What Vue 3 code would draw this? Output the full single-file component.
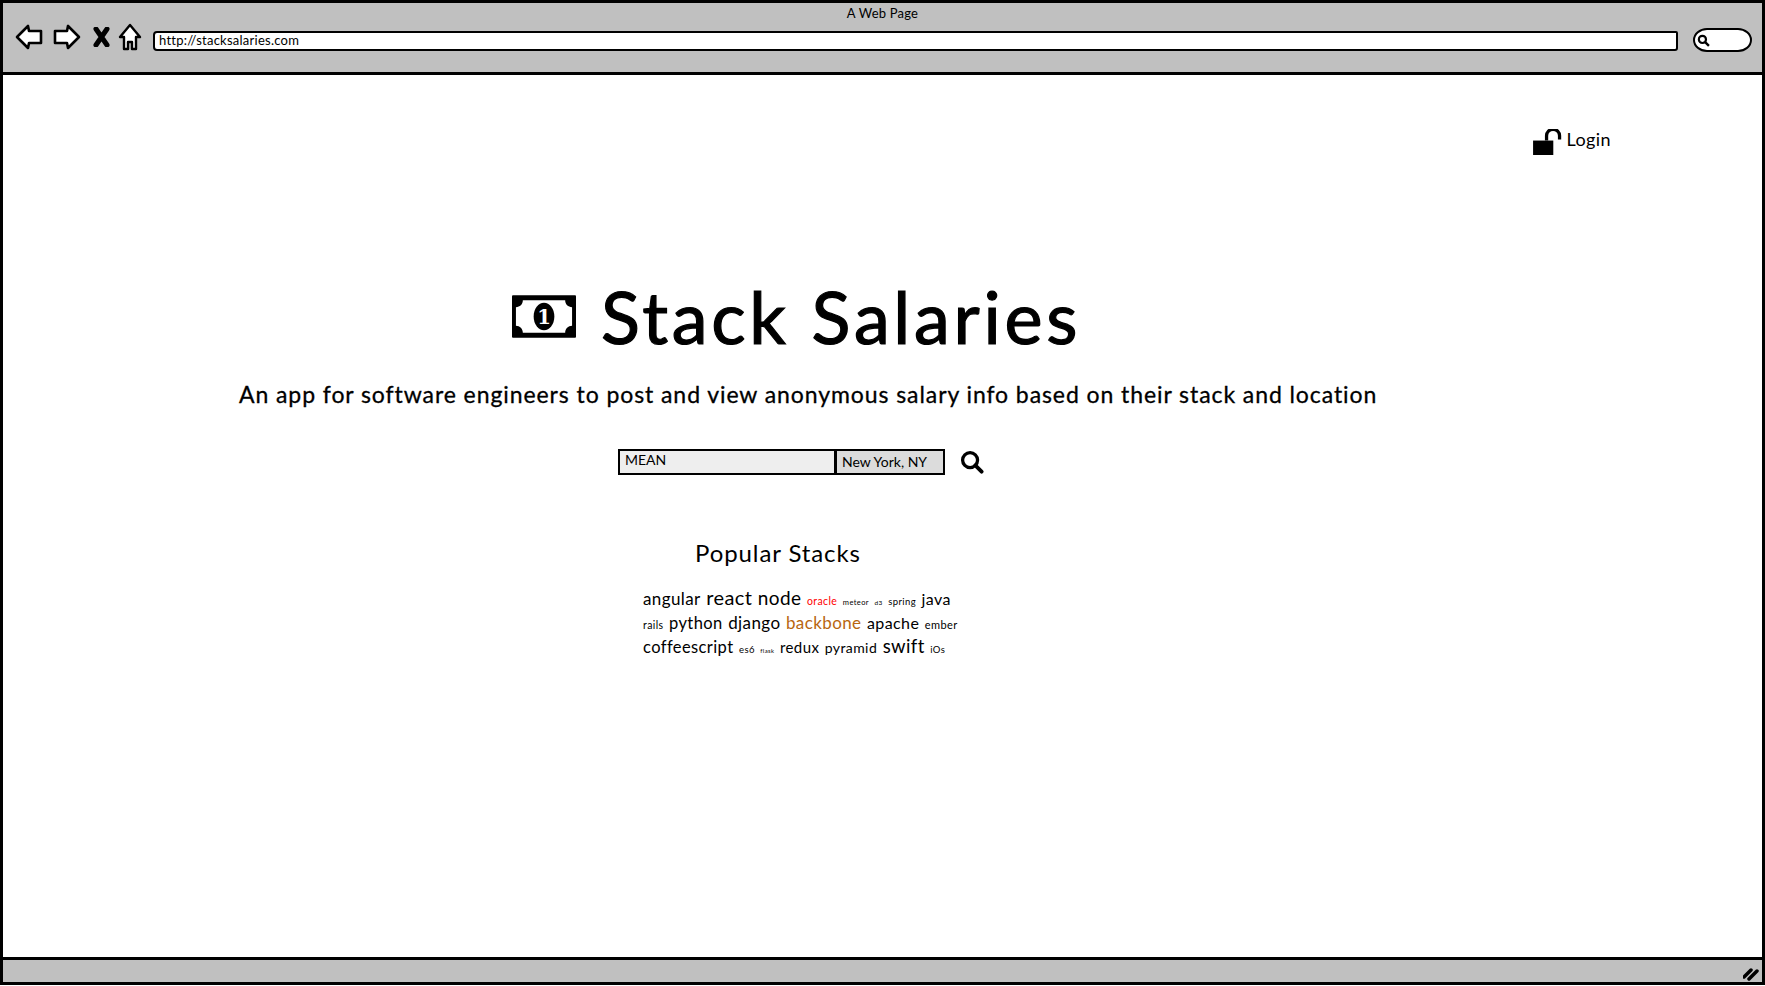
<script setup>
const tagRows = [
  [
    { text: 'angular', size: 17 },
    { text: 'react', size: 20 },
    { text: 'node', size: 19 },
    { text: 'oracle', size: 10.5 },
    { text: 'meteor', size: 7.5 },
    { text: 'd3', size: 6.5 },
    { text: 'spring', size: 9.5 },
    { text: 'java', size: 16 }
  ],
  [
    { text: 'rails', size: 10.5 },
    { text: 'python', size: 16.5 },
    { text: 'django', size: 17 },
    { text: 'backbone', size: 17 },
    { text: 'apache', size: 16 },
    { text: 'ember', size: 11 }
  ],
  [
    { text: 'coffeescript', size: 16.5 },
    { text: 'es6', size: 9.5 },
    { text: 'flask', size: 6 },
    { text: 'redux', size: 15 },
    { text: 'pyramid', size: 14 },
    { text: 'swift', size: 18.5 },
    { text: 'iOs', size: 9.5 }
  ]
]

const tagColors = { oracle: '#ff0000', backbone: '#b8660f' }
</script>

<template>
  <div class="window">
    <header class="toolbar">
      <div class="page-title">A Web Page</div>
      <div class="nav">
        <svg class="nav-icon" width="28" height="26" viewBox="0 0 28 26">
          <path d="M2 13 L13 2 L14 7 L26 7 L26 19 L14 19 L13 24 Z" fill="#fff" stroke="#000" stroke-width="2.6" stroke-linejoin="round" />
        </svg>
        <svg class="nav-icon" width="29" height="26" viewBox="0 0 29 26">
          <path d="M27 13 L16 2 L15 7 L3 7 L3 19 L15 19 L16 24 Z" fill="#fff" stroke="#000" stroke-width="2.6" stroke-linejoin="round" />
        </svg>
        <svg class="nav-icon stop" width="17" height="20" viewBox="0 0 17 20">
          <path d="M3 2 L14 18 M14 2 L3 18" fill="none" stroke="#000" stroke-width="5" stroke-linecap="round" />
        </svg>
        <svg class="nav-icon home" width="24" height="28" viewBox="0 0 24 28">
          <path d="M12 2 L22 14 L18 14 L18 26 L14 26 L14 19 L10 19 L10 26 L6 26 L6 14 L2 14 Z" fill="#fff" stroke="#000" stroke-width="2.4" stroke-linejoin="round" />
        </svg>
        <div class="url">http://stacksalaries.com</div>
        <div class="browser-search">
          <svg width="13" height="13" viewBox="0 0 12 12">
            <circle cx="5" cy="5" r="3.3" fill="none" stroke="#000" stroke-width="2" />
            <path d="M7.5 7.5 L11 11" stroke="#000" stroke-width="2.2" />
          </svg>
        </div>
      </div>
    </header>

    <main class="content">
      <div class="login-row">
        <svg width="30" height="26" viewBox="0 0 31 27">
          <rect x="0" y="12" width="21" height="15" fill="#000" />
          <path d="M14 12 L14 7 A6.5 6.5 0 0 1 27.5 7 L27.5 11" fill="none" stroke="#000" stroke-width="3.4" />
        </svg>
        <span class="login">Login</span>
      </div>

      <div class="brand">
        <svg width="64" height="43" viewBox="0 0 65 43">
          <rect width="65" height="43" rx="1" fill="#000" />
          <path d="M11 5 L54 5 C54 9 57 12 61 12 L61 31 C57 31 54 34 54 38 L11 38 C11 34 8 31 4 31 L4 12 C8 12 11 9 11 5 Z" fill="#fff" />
          <ellipse cx="32.5" cy="21.5" rx="10.5" ry="14" fill="#000" />
          <text x="32.5" y="29" class="bill-digit">1</text>
        </svg>
        <h1>Stack Salaries</h1>
      </div>

      <p class="tagline">An app for software engineers to post and view anonymous salary info based on their stack and location</p>

      <div class="search">
        <div class="field stack-field">MEAN</div>
        <div class="field city-field">New York, NY</div>
        <svg class="search-icon" width="24" height="24" viewBox="0 0 25 25">
          <circle cx="10.5" cy="10.5" r="7.8" fill="none" stroke="#000" stroke-width="3.4" />
          <path d="M16 16 L22.5 22.5" stroke="#000" stroke-width="4" stroke-linecap="round" />
        </svg>
      </div>

      <h2>Popular Stacks</h2>

      <div class="tags">
        <div v-for="(row, i) in tagRows" :key="i" class="tag-row">
          <span
            v-for="tag in row"
            :key="tag.text"
            :style="{ fontSize: tag.size + 'px', color: tagColors[tag.text] || '#000' }"
          >{{ tag.text }}</span>
        </div>
      </div>
    </main>

    <footer class="statusbar">
      <svg width="16" height="14" viewBox="0 0 16 14">
        <path d="M1 10 L8 3 M6 12 L14 4" stroke="#000" stroke-width="3.5" stroke-linecap="round" />
      </svg>
    </footer>
  </div>
</template>

<style scoped>
.window {
  height: 985px;
  box-sizing: border-box;
  display: flex;
  flex-direction: column;
  border: 3px solid #000;
  background: #fff;
  color: #000;
  font-family: Lato, "Noto Sans", sans-serif;
}

.toolbar {
  height: 72px;
  box-sizing: border-box;
  flex: none;
  background: #c0c0c0;
  border-bottom: 3px solid #000;
}

.page-title {
  padding-top: 2px;
  text-align: center;
  font-size: 13px;
  line-height: 17px;
  letter-spacing: 0.2px;
}

.nav {
  display: flex;
  align-items: center;
  margin-top: 3px;
  padding-left: 12px;
  padding-right: 10px;
  height: 30px;
}

.nav-icon {
  flex: none;
  margin-bottom: 6px;
}

.nav-icon + .nav-icon {
  margin-left: 9px;
}

.nav-icon.stop {
  margin-left: 12px;
}

.nav-icon.home {
  margin-left: 8px;
}

.url {
  flex: 1;
  margin-left: 11px;
  margin-top: 2px;
  height: 20px;
  box-sizing: border-box;
  padding-left: 4px;
  background: #fff;
  border: 2.5px solid #000;
  border-radius: 4px 2px 3px 4px;
  font-size: 13px;
  line-height: 15px;
  letter-spacing: 0.25px;
}

.browser-search {
  flex: none;
  width: 59px;
  height: 24px;
  box-sizing: border-box;
  margin-left: 15px;
  padding: 4px 0 0 2px;
  background: #fff;
  border: 2.5px solid #000;
  border-radius: 14px / 12px;
}

.browser-search svg {
  display: block;
}

.content {
  flex: 1;
  min-height: 0;
  display: flex;
  flex-direction: column;
  align-items: flex-start;
}

.login-row {
  align-self: flex-end;
  display: flex;
  align-items: flex-end;
  gap: 4px;
  margin-top: 52px;
  margin-right: 151px;
}

.login {
  font-size: 18px;
  line-height: 24px;
  padding-bottom: 4px;
  letter-spacing: 0.4px;
}

.brand {
  display: flex;
  align-items: center;
  gap: 25px;
  margin-top: 118px;
  margin-left: 509px;
}

.bill-digit {
  font-family: "DejaVu Serif", serif;
  font-size: 20px;
  font-weight: 700;
  fill: #fff;
  text-anchor: middle;
}

h1 {
  margin: 0;
  font-size: 72px;
  line-height: 86px;
  font-weight: 400;
  letter-spacing: 3.7px;
  -webkit-text-stroke: 1.2px #000;
}

.tagline {
  margin: 19px 0 0 236px;
  font-size: 23px;
  line-height: 32px;
  letter-spacing: 0.92px;
  -webkit-text-stroke: 0.3px #000;
}

.search {
  display: flex;
  align-items: center;
  margin-top: 39px;
  margin-left: 615px;
}

.field {
  box-sizing: border-box;
  height: 26px;
  border: 2.5px solid #000;
  font-size: 14px;
  padding-left: 5px;
}

.stack-field {
  width: 218px;
  background: #eeeeee;
  line-height: 18px;
}

.city-field {
  width: 110px;
  margin-left: -1px;
  background: #dcdcdc;
  line-height: 21px;
}

.search-icon {
  margin-left: 15px;
}

h2 {
  margin: 63px 0 0 692px;
  font-size: 24px;
  line-height: 30px;
  font-weight: 400;
  letter-spacing: 0.9px;
}

.tags {
  margin: 17px 0 0 640px;
}

.tag-row {
  display: flex;
  align-items: baseline;
  gap: 5.5px;
  height: 24.5px;
  line-height: 25px;
  white-space: nowrap;
  letter-spacing: 0.4px;
}

.statusbar {
  height: 25px;
  box-sizing: border-box;
  flex: none;
  display: flex;
  justify-content: flex-end;
  align-items: flex-end;
  padding: 0 3px 1px 0;
  background: #c0c0c0;
  border-top: 3px solid #000;
}
</style>

<style>
html,
body {
  margin: 0;
  overflow: hidden;
}
</style>
